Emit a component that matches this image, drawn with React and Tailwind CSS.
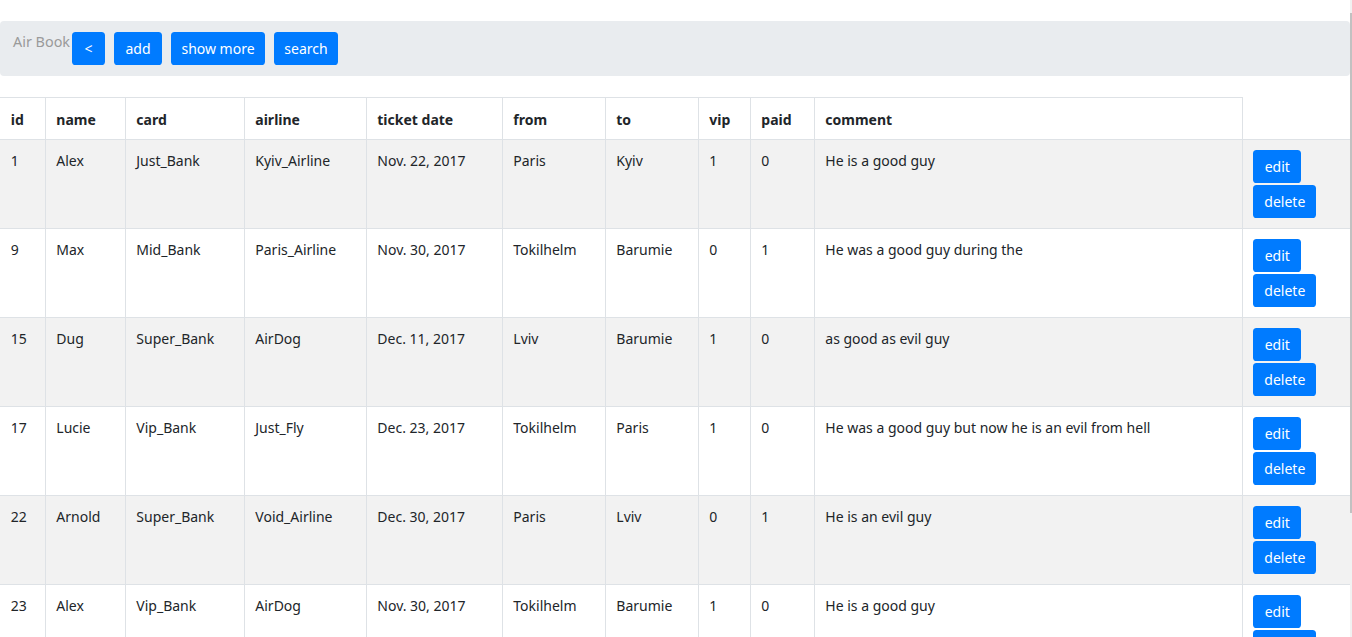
import React from "react";

const rows = [
  ["1", "Alex", "Just_Bank", "Kyiv_Airline", "Nov. 22, 2017", "Paris", "Kyiv", "1", "0", "He is a good guy"],
  ["9", "Max", "Mid_Bank", "Paris_Airline", "Nov. 30, 2017", "Tokilhelm", "Barumie", "0", "1", "He was a good guy during the"],
  ["15", "Dug", "Super_Bank", "AirDog", "Dec. 11, 2017", "Lviv", "Barumie", "1", "0", "as good as evil guy"],
  ["17", "Lucie", "Vip_Bank", "Just_Fly", "Dec. 23, 2017", "Tokilhelm", "Paris", "1", "0", "He was a good guy but now he is an evil from hell"],
  ["22", "Arnold", "Super_Bank", "Void_Airline", "Dec. 30, 2017", "Paris", "Lviv", "0", "1", "He is an evil guy"],
  ["23", "Alex", "Vip_Bank", "AirDog", "Nov. 30, 2017", "Tokilhelm", "Barumie", "1", "0", "He is a good guy"],
];

const heads = ["id", "name", "card", "airline", "ticket date", "from", "to", "vip", "paid", "comment"];
const widths = ["w-[45px]", "w-[80px]", "w-[119px]", "w-[122px]", "w-[136px]", "w-[103px]", "w-[93px]", "w-[52px]", "w-[64px]", "w-[428px]", "w-[108px]"];

function Btn({ children, className = "" }) {
  return (
    <button
      className={
        "h-[33px] rounded-[3.6px] bg-[#007bff] text-white text-[14px] leading-[21px] flex items-center justify-center " +
        className
      }
    >
      {children}
    </button>
  );
}

export default function App() {
  return (
    <div
      className="flex h-[637px] w-[1352px] overflow-hidden bg-white text-[#212529]"
      style={{ fontFamily: '"Noto Sans", "Open Sans", sans-serif' }}
    >
      <div className="w-[1350px] shrink-0">
        <div className="mt-[21px] h-[55px] rounded-[4px] bg-[#e9ecef] flex items-start pt-[10px] pl-[13px]">
          <span className="w-[59px] text-[14.4px] leading-[21.6px] text-[#9a9a9a] whitespace-nowrap">Air Book</span>
          <div className="flex gap-[9px] pt-[1px]">
            <Btn className="w-[33px]">&lt;</Btn>
            <Btn className="w-[48px]">add</Btn>
            <Btn className="w-[94px]">show more</Btn>
            <Btn className="w-[64px]">search</Btn>
          </div>
        </div>

        <table className="mt-[21px] w-[1350px] table-fixed border-collapse text-[14px] leading-[21px]">
          <colgroup>
            {widths.map((w, i) => (
              <col key={i} className={w} />
            ))}
          </colgroup>
          <thead>
            <tr className="h-[42px]">
              {heads.map((h, i) => (
                <th
                  key={h}
                  className={
                    "border border-[#dee2e6] px-[10.8px] pt-[1px] text-left font-bold align-middle whitespace-nowrap " +
                    (i === 0 ? "border-l-0" : "")
                  }
                >
                  {h}
                </th>
              ))}
              <th className="border-b border-[#dee2e6]"></th>
            </tr>
          </thead>
          <tbody>
            {rows.map((r, ri) => (
              <tr key={ri} className={"h-[89px] " + (ri % 2 === 0 ? "bg-[#f2f2f2]" : "bg-white")}>
                {r.map((c, ci) => (
                  <td
                    key={ci}
                    className={
                      "border border-[#dee2e6] px-[10.8px] pt-[10px] align-top whitespace-nowrap " +
                      (ci === 0 ? "border-l-0" : "")
                    }
                  >
                    {c}
                  </td>
                ))}
                <td className="border border-[#dee2e6] border-r-[#e9e9e9] px-[10.8px] pt-[10px] align-top">
                  <div className="flex flex-col gap-[2px]">
                    <Btn className="w-[48px]">edit</Btn>
                    <Btn className="w-[63px]">delete</Btn>
                  </div>
                </td>
              </tr>
            ))}
          </tbody>
        </table>
      </div>
      <div className="w-[2px] h-[637px] bg-[#f1f1f1] flex flex-col">
        <div className="h-[13px]"></div>
        <div className="h-[500px] bg-[#c1c1c1]"></div>
      </div>
    </div>
  );
}
